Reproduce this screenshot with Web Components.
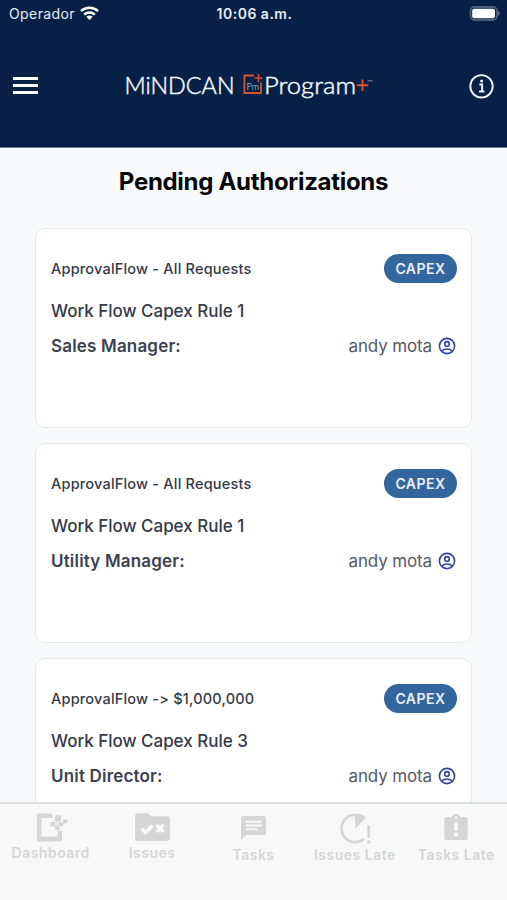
<!DOCTYPE html>
<html lang="en">
<head>
<meta charset="utf-8">
<meta name="viewport" content="width=device-width, initial-scale=1">
<title>Pending Authorizations</title>
<style>
  body {
    margin: 0;
    height: 900px;
    overflow: hidden;
    background-color: #f8fafc;
    font-family: Inter, "Liberation Sans", sans-serif;
  }
</style>
</head>
<body>
<mp-app>
  <mp-header slot="header" carrier="Operador" time="10:06 a.m."></mp-header>
  <mp-request-card flow="ApprovalFlow - All Requests" rule="Work Flow Capex Rule 1" role-name="Sales Manager:" user="andy mota">CAPEX</mp-request-card>
  <mp-request-card flow="ApprovalFlow - All Requests" rule="Work Flow Capex Rule 1" role-name="Utility Manager:" user="andy mota">CAPEX</mp-request-card>
  <mp-request-card flow="ApprovalFlow -&gt; $1,000,000" rule="Work Flow Capex Rule 3" role-name="Unit Director:" user="andy mota">CAPEX</mp-request-card>
  <mp-tab-bar slot="tabs">
    <mp-tab icon="dashboard">Dashboard</mp-tab>
    <mp-tab icon="issues">Issues</mp-tab>
    <mp-tab icon="tasks" low>Tasks</mp-tab>
    <mp-tab icon="issuesLate" low>Issues Late</mp-tab>
    <mp-tab icon="tasksLate" low>Tasks Late</mp-tab>
  </mp-tab-bar>
</mp-app>

<script>
const attach = (element, html) => {
  const template = document.createElement('template')
  template.innerHTML = html
  const shadow = element.attachShadow({mode: "open"})
  shadow.append(template.content.cloneNode(true))
  return shadow
}

const tabIcons = {
  dashboard: `
    <svg width="34" height="30" viewBox="0 0 34 30">
      <path fill="currentColor" d="M3 .5h15.500V5H7.500v18.500h16V17.500H28v11H3z"/>
      <path fill="currentColor" d="M21 2.200h6v6h-6zM16.200 9h4.800v4.500h-4.800zM21 13h4.500v4H21zM29 6.500h4.200v4H29zM25 9h4v4h-4z"/>
      <path fill="currentColor" opacity=".45" d="M21 8.200h4V13h-4z"/>
    </svg>`,
  issues: `
    <svg width="36" height="30" viewBox="0 0 36 30">
      <path fill="currentColor" d="M4 .3h10l4 3h15a3 3 0 0 1 3 3v18.700a3 3 0 0 1-3 3H4a3 3 0 0 1-3-3v-21.700a3 3 0 0 1 3-3z"/>
      <path fill="none" stroke="#f8f8f8" stroke-width="3.400" d="M7.500 15.500l4 4 7-7M22.500 12l7 7M29.500 12l-7 7"/>
    </svg>`,
  tasks: `
    <svg width="27" height="30" viewBox="0 0 27 30">
      <path fill="currentColor" d="M3.500 3h20a2.500 2.500 0 0 1 2.500 2.500v14a2.500 2.500 0 0 1-2.500 2.500H6l-5 5V5.500A2.500 2.500 0 0 1 3.500 3z"/>
      <path fill="none" stroke="#f8f8f8" stroke-width="2" d="M6 8.700h16M6 12.500h16M6 16.300h11"/>
    </svg>`,
  issuesLate: `
    <svg width="32" height="32" viewBox="0 0 32 32">
      <path fill="none" stroke="currentColor" stroke-width="2.800" d="M16 1.800A13.700 13.700 0 1 0 25 26"/>
      <path fill="currentColor" d="M16 .4c4.500 0 8 1.300 11 4L16 16zM28.200 12.500h3l-.4 12.500h-2.200zM28.200 27.500h3v3h-3z"/>
    </svg>`,
  tasksLate: `
    <svg width="24" height="30" viewBox="0 0 24 30">
      <path fill="currentColor" fill-rule="evenodd" d="M2.500 4H8a4.200 4.200 0 0 1 8 0h5.500A2.200 2.200 0 0 1 23.700 6.200v18.600a2.200 2.200 0 0 1-2.200 2.200h-19A2.200 2.200 0 0 1 .3 24.800V6.200A2.200 2.200 0 0 1 2.500 4zM12 3.200a1.300 1.300 0 1 0 0 2.600 1.300 1.300 0 0 0 0-2.600z"/>
      <path fill="#f8f8f8" d="M10.200 9.500h3.600v8h-3.600zM10.200 19.800h3.600v3.400h-3.600z"/>
    </svg>`
}

class MpApp extends HTMLElement {
  constructor() {
    super()
    attach(this, `
      <style>
        :host {
          display: flex;
          flex-direction: column;
          height: 900px;
          overflow: hidden;
        }

        main {
          flex: 1;
          min-height: 0;
          overflow: hidden;
          padding: 0 35px;
        }

        h1 {
          margin: 18px 0 31px;
          font-size: 24px;
          line-height: 31px;
          font-weight: 650;
          letter-spacing: -.3px;
          text-align: center;
          color: #050505;
        }

        .cards {
          display: flex;
          flex-direction: column;
          gap: 15px;
        }
      </style>

      <slot name="header"></slot>
      <main>
        <h1>Pending Authorizations</h1>
        <div class="cards"><slot></slot></div>
      </main>
      <slot name="tabs"></slot>
    `)
  }
}

customElements.define('mp-app', MpApp)

class MpLogo extends HTMLElement {
  constructor() {
    super()
    attach(this, `
      <style>
        :host {
          display: block;
        }

        svg {
          display: block;
          font-family: Lato, "Liberation Sans", sans-serif;
          font-weight: 300;
        }
      </style>

      <svg width="260" height="36" viewBox="124 68.500 260 36">
        <g fill="#f4f8fd" stroke="#f4f8fd" stroke-width=".45">
          <text x="124.500" y="94.500" font-size="22.500" textLength="110" lengthAdjust="spacingAndGlyphs">MiNDCAN</text>
          <text x="264" y="94.500" font-size="22.500" textLength="92" lengthAdjust="spacingAndGlyphs">Program</text>
        </g>
        <g fill="#dce6f2">
          <text x="246.500" y="90" font-size="9" textLength="12.500" lengthAdjust="spacingAndGlyphs">Pm</text>
          <text x="367.500" y="84" font-size="6" textLength="5.500" lengthAdjust="spacingAndGlyphs">™</text>
        </g>
        <g fill="none" stroke="#d9532f">
          <path stroke-width="1.800" d="M254 76h-9.600v17.500H261V83"/>
          <path stroke-width="1.500" d="M258.500 74.500v8M254.500 78.500h8"/>
          <path stroke-width="1.900" d="M362.500 80v11.500M356.800 85.700h11.500"/>
        </g>
      </svg>
    `)
  }
}

customElements.define('mp-logo', MpLogo)

class MpHeader extends HTMLElement {
  constructor() {
    super()
    attach(this, `
      <style>
        :host {
          display: flex;
          flex-direction: column;
          flex: none;
          height: 148px;
          background-color: #072146;
          border-bottom: 1px solid #6d7d95;
          box-sizing: border-box;
          color: #e6edf6;
        }

        .status {
          display: grid;
          grid-template-columns: 1fr auto 1fr;
          align-items: center;
          height: 27px;
          padding: 0 7px 0 9px;
          font-size: 14px;
        }

        .carrier {
          display: flex;
          align-items: center;
          gap: 5px;
          letter-spacing: .4px;
        }

        .time {
          font-weight: 600;
          letter-spacing: .5px;
        }

        .battery {
          justify-self: end;
        }

        .bar {
          display: flex;
          align-items: center;
          justify-content: space-between;
          height: 118px;
          padding: 0 13px 0 12px;
        }

        svg {
          display: block;
        }
      </style>

      <div class="status">
        <div class="carrier">
          <span class="name"></span>
          <svg width="19" height="15" viewBox="0 0 19 15">
            <path fill="none" stroke="#fff" stroke-width="2.400" d="M1 5.200a12.300 12.300 0 0 1 17 0M4.200 8.600a7.600 7.600 0 0 1 10.600 0"/>
            <path fill="#fff" d="M6.300 10.800a4.600 4.600 0 0 1 6.400 0L9.500 14z"/>
          </svg>
        </div>
        <div class="time"></div>
        <svg class="battery" width="31" height="15" viewBox="0 0 31 15">
          <rect x="1.500" y="1" width="26.500" height="13" rx="4" fill="none" stroke="#4d5f7c" stroke-width="1.800"/>
          <rect x="3.200" y="2.700" width="22.800" height="9.600" rx="2" fill="#fff"/>
          <path fill="#65758f" d="M29 5c2 .8 2 4 0 4.800z"/>
        </svg>
      </div>
      <div class="bar">
        <svg width="26" height="20" viewBox="0 0 26 20">
          <path fill="#fff" d="M1 2h25v3H1zM1 9h25v3H1zM1 16h25v3H1z" transform="translate(0 -1)"/>
        </svg>
        <mp-logo></mp-logo>
        <svg width="25" height="25" viewBox="0 0 25 25" fill="none" stroke="#edf3fa">
          <circle cx="12.500" cy="12.300" r="11.200" stroke-width="1.900"/>
          <path stroke-width="2" d="M10.300 10.600h2.800v6.700M10 17.500h5.400"/>
          <circle cx="12.600" cy="7.100" r="1.500" fill="#edf3fa" stroke="none"/>
        </svg>
      </div>
    `)
    this.shadowRoot.querySelector('.name').textContent = this.getAttribute('carrier')
    this.shadowRoot.querySelector('.time').textContent = this.getAttribute('time')
  }
}

customElements.define('mp-header', MpHeader)

class MpRequestCard extends HTMLElement {
  constructor() {
    super()
    const shadow = attach(this, `
      <style>
        :host {
          display: block;
          box-sizing: border-box;
          height: 200px;
          padding: 25px 14px 0 15px;
          background-color: #fff;
          border: 1px solid #e5e9ee;
          border-radius: 10px;
          color: #343a46;
        }

        .row {
          display: flex;
          align-items: center;
          justify-content: space-between;
        }

        .flow {
          font-size: 14.500px;
          font-weight: 500;
          letter-spacing: .2px;
        }

        .badge {
          box-sizing: border-box;
          width: 73px;
          height: 29px;
          border-radius: 15px;
          background-color: #33669d;
          color: #e8f1fa;
          font-size: 14px;
          font-weight: 600;
          line-height: 29px;
          letter-spacing: .5px;
          text-align: center;
        }

        .rule {
          margin-top: 17px;
          font-size: 17px;
          font-weight: 500;
          line-height: 22px;
          letter-spacing: -.02px;
        }

        .person {
          margin-top: 11px;
          height: 26px;
          font-size: 17px;
        }

        .role {
          font-weight: 600;
          letter-spacing: .18px;
          color: #3c424f;
        }

        .user {
          display: flex;
          align-items: center;
          gap: 6px;
          padding-right: 1px;
          letter-spacing: -.13px;
          color: #555a61;
        }
      </style>

      <div class="row">
        <span class="flow"></span>
        <span class="badge"><slot></slot></span>
      </div>
      <div class="rule"></div>
      <div class="row person">
        <span class="role"></span>
        <span class="user">
          <span class="name"></span>
          <svg width="18" height="18" viewBox="0 0 18 18" fill="none" stroke="#2f459b" stroke-width="1.600">
            <circle cx="9" cy="9" r="7.600"/>
            <circle cx="9" cy="6.900" r="2.300"/>
            <path d="M3.800 14c2.600-2.700 7.800-2.700 10.400 0"/>
          </svg>
        </span>
      </div>
    `)
    shadow.querySelector('.flow').textContent = this.getAttribute('flow')
    shadow.querySelector('.rule').textContent = this.getAttribute('rule')
    shadow.querySelector('.role').textContent = this.getAttribute('role-name')
    shadow.querySelector('.name').textContent = this.getAttribute('user')
  }
}

customElements.define('mp-request-card', MpRequestCard)

class MpTabBar extends HTMLElement {
  constructor() {
    super()
    attach(this, `
      <style>
        :host {
          display: grid;
          grid-template-columns: repeat(5, 1fr);
          flex: none;
          box-sizing: border-box;
          height: 98px;
          border-top: 2px solid #dedfe1;
          background-color: #f8f8f8;
        }
      </style>
      <slot></slot>
    `)
  }
}

customElements.define('mp-tab-bar', MpTabBar)

class MpTab extends HTMLElement {
  constructor() {
    super()
    attach(this, `
      <style>
        :host {
          display: flex;
          flex-direction: column;
          align-items: center;
          padding-top: 9px;
          color: #d6d6d6;
          font-size: 14px;
          font-weight: 600;
          line-height: 18px;
          letter-spacing: .5px;
          white-space: nowrap;
        }

        .icon {
          display: flex;
          height: 31px;
        }

        :host([low]) .icon {
          height: 33px;
        }
      </style>

      <div class="icon">${tabIcons[this.getAttribute('icon')]}</div>
      <span><slot></slot></span>
    `)
  }
}

customElements.define('mp-tab', MpTab)
</script>
</body>
</html>
